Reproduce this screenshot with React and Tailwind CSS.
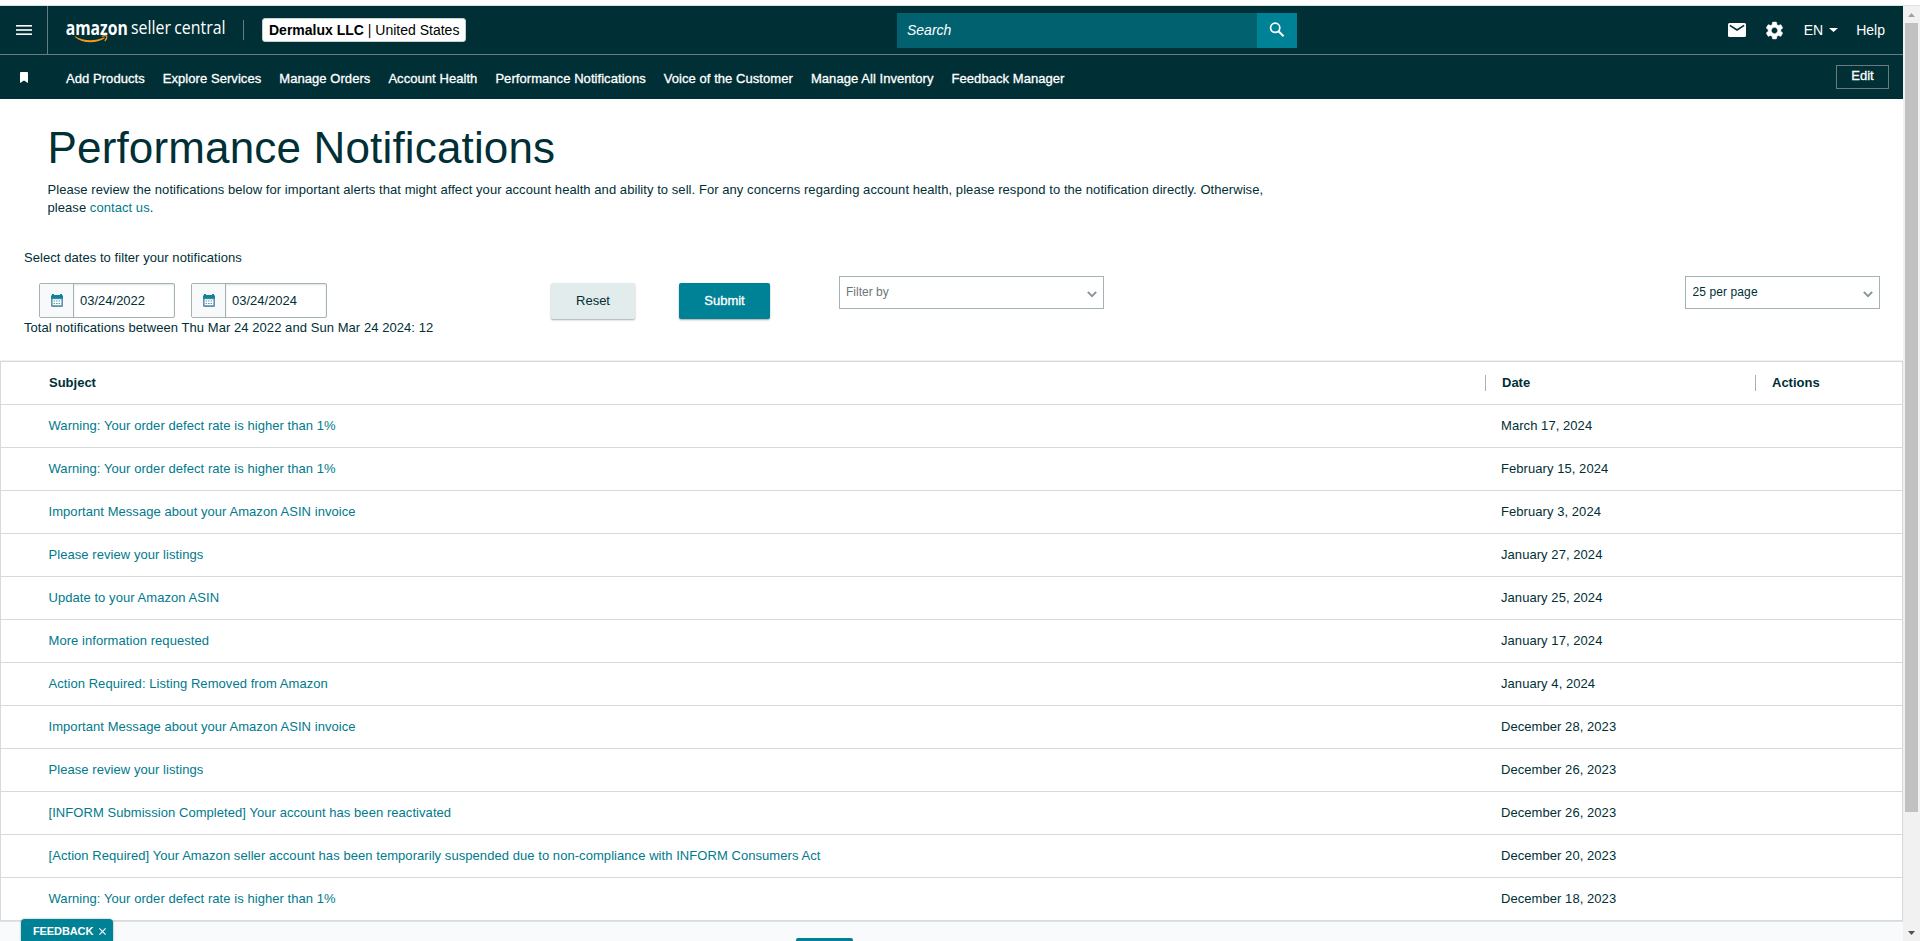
import React from "react";

const links = [
  "Add Products",
  "Explore Services",
  "Manage Orders",
  "Account Health",
  "Performance Notifications",
  "Voice of the Customer",
  "Manage All Inventory",
  "Feedback Manager",
];

const rows = [
  ["Warning: Your order defect rate is higher than 1%", "March 17, 2024"],
  ["Warning: Your order defect rate is higher than 1%", "February 15, 2024"],
  ["Important Message about your Amazon ASIN invoice", "February 3, 2024"],
  ["Please review your listings", "January 27, 2024"],
  ["Update to your Amazon ASIN", "January 25, 2024"],
  ["More information requested", "January 17, 2024"],
  ["Action Required: Listing Removed from Amazon", "January 4, 2024"],
  ["Important Message about your Amazon ASIN invoice", "December 28, 2023"],
  ["Please review your listings", "December 26, 2023"],
  ["[INFORM Submission Completed] Your account has been reactivated", "December 26, 2023"],
  [
    "[Action Required] Your Amazon seller account has been temporarily suspended due to non-compliance with INFORM Consumers Act",
    "December 20, 2023",
  ],
  ["Warning: Your order defect rate is higher than 1%", "December 18, 2023"],
];

function Logo() {
  return (
    <svg width="162" height="32" viewBox="0 0 162 32" overflow="visible" className="shrink-0">
      <text x="-0.3" y="22.8" textLength="62" lengthAdjust="spacingAndGlyphs" fontFamily="'Open Sans', sans-serif" fontWeight="700" fontSize="20" fill="#fff">
        amazon
      </text>
      <text x="65" y="22.3" textLength="94.5" lengthAdjust="spacingAndGlyphs" wordSpacing="-1" fontFamily="'Open Sans', sans-serif" fontWeight="400" fontSize="18.8" fill="#fff">
        seller central
      </text>
      <path d="M9 24.2 C17 29 29 29.6 38.2 25.2 L38.8 26.2 C30 32 16.5 31.8 8.6 24.8 Z" fill="#f7981f" />
      <path d="M36.2 24.3 C38 23.5 40 23.5 40.8 24 C41 25.2 40.3 27.2 39.1 28.5" fill="none" stroke="#f7981f" strokeWidth="1.2" strokeLinecap="round" />
    </svg>
  );
}

function TopBar() {
  return (
    <div className="flex h-[49px] items-center border-b border-[#6b7b7d]">
      <div className="flex h-full w-[48px] shrink-0 items-center justify-center border-r border-[#6b7b7d]">
        <svg width="16" height="10" viewBox="0 0 16 10" fill="#fff">
          <rect width="16" height="1.6" />
          <rect y="4.2" width="16" height="1.6" />
          <rect y="8.4" width="16" height="1.6" />
        </svg>
      </div>
      <div className="-mt-1 ml-[18px] h-8 shrink-0">
        <Logo />
      </div>
      <div className="ml-[15px] h-5 w-px shrink-0 bg-[#6b7b7d]" />
      <div className="ml-[18px] flex h-6 w-[204px] shrink-0 items-center whitespace-nowrap rounded-[3px] border border-[#c8cfd0] bg-white pl-[6px] text-sm text-black">
        <span>
          <b>Dermalux LLC</b> | United States
        </span>
      </div>
      <div className="ml-[431px] flex h-[35px] w-[400px] shrink-0">
        <div className="flex flex-1 items-center bg-[#02616f] pl-[10px] text-sm italic text-white">Search</div>
        <div className="flex w-10 items-center justify-center bg-[#008296]">
          <svg width="16" height="16" viewBox="0 0 16 16" fill="none" stroke="#fff">
            <circle cx="6.2" cy="5.8" r="4.6" strokeWidth="1.7" />
            <path d="M9.5 9.2 L14.6 14.2" strokeWidth="2" />
          </svg>
        </div>
      </div>
      <div className="ml-auto flex items-center pr-[18px] text-sm text-white">
        <svg width="18" height="14" viewBox="0 0 18 14">
          <rect width="18" height="14" rx="1.5" fill="#fff" />
          <path d="M1.8 2.4 L9 7 L16.2 2.4" fill="none" stroke="#002f36" strokeWidth="1.6" />
        </svg>
        <svg className="ml-[18.5px]" width="21" height="21" viewBox="0 0 24 24" fill="#fff" stroke="#fff" strokeWidth="0.6">
          <path d="M19.14 12.94c.04-.3.06-.61.06-.94 0-.32-.02-.64-.07-.94l2.03-1.58c.18-.14.23-.41.12-.61l-1.92-3.32c-.12-.22-.37-.29-.59-.22l-2.39.96c-.5-.38-1.03-.7-1.62-.94l-.36-2.54c-.04-.24-.24-.41-.48-.41h-3.84c-.24 0-.43.17-.47.41l-.36 2.54c-.59.24-1.13.57-1.62.94l-2.39-.96c-.22-.08-.47 0-.59.22L2.74 8.87c-.12.21-.08.47.12.61l2.03 1.58c-.05.3-.09.63-.09.94s.02.64.07.94l-2.03 1.58c-.18.14-.23.41-.12.61l1.92 3.32c.12.22.37.29.59.22l2.39-.96c.5.38 1.03.7 1.62.94l.36 2.54c.05.24.24.41.48.41h3.84c.24 0 .44-.17.47-.41l.36-2.54c.59-.24 1.13-.56 1.62-.94l2.39.96c.22.08.47 0 .59-.22l1.92-3.32c.12-.22.07-.47-.12-.61l-2.01-1.58zM12 15.6c-1.98 0-3.6-1.62-3.6-3.6s1.62-3.6 3.6-3.6 3.6 1.62 3.6 3.6-1.62 3.6-3.6 3.6z" />
        </svg>
        <span className="ml-[18.5px]">EN</span>
        <svg className="ml-[6px]" width="9" height="4" viewBox="0 0 9 4" fill="#fff">
          <path d="M0 0H9L4.5 4Z" />
        </svg>
        <span className="ml-[18px]">Help</span>
      </div>
    </div>
  );
}

function NavBar() {
  return (
    <div className="flex h-11 items-center">
      <div className="flex w-[47px] shrink-0 justify-center pl-px pt-px">
        <svg width="8" height="11" viewBox="0 0 9 11" preserveAspectRatio="none" fill="#fff">
          <path d="M1 0H8Q9 0 9 1V11L4.5 8.6L0 11V1Q0 0 1 0Z" />
        </svg>
      </div>
      <nav className="ml-[19px] flex gap-[18px] whitespace-nowrap pt-[4px] text-[13px] leading-[18px] tracking-[0.06px] text-white [-webkit-text-stroke:0.3px_white]">
        {links.map((l) => (
          <a key={l}>{l}</a>
        ))}
      </nav>
      <div className="mb-[1px] ml-auto mr-[14px] flex h-6 w-[53px] items-center justify-center border border-[#6b7b7d] pb-[1px] text-[13px] text-white [-webkit-text-stroke:0.3px_white]">
        Edit
      </div>
    </div>
  );
}

function DateField({ value }) {
  return (
    <div className="flex h-[35px] w-[136px] shrink-0 rounded-[2px] border border-[#a3b2b3]">
      <div className="flex w-[34px] items-center justify-center border-r border-[#a3b2b3] bg-[#f8f9fa]">
        <svg width="12" height="13" viewBox="0 0 12 13">
          <path d="M1.5 1H10.5Q12 1 12 2.5V11.5Q12 13 10.5 13H1.5Q0 13 0 11.5V2.5Q0 1 1.5 1Z" fill="#5b93ae" />
          <path d="M1 0H3V1H9V0H11V1.2Q12 1.5 12 2.5V4.5H0V2.5Q0 1.5 1 1.2Z" fill="#128297" />
          <path d="M1.6 5.2H10.4V11.2H1.6Z" fill="#fff" />
          <path d="M2.6 7H9.6M2.6 9.5H9.6" stroke="#5b93ae" strokeWidth="1.1" strokeDasharray="1.5 1" />
        </svg>
      </div>
      <div className="flex flex-1 items-center pl-[6px] text-[13px] shadow-[inset_0_1px_2px_rgba(0,0,0,0.12)]">{value}</div>
    </div>
  );
}

function Chevron() {
  return (
    <svg width="10" height="7" viewBox="0 0 10 7" fill="none" stroke="#879596" strokeWidth="1.9">
      <path d="M0.8 0.9L5 5.2L9.2 0.9" />
    </svg>
  );
}

function Filters() {
  return (
    <div className="flex h-[43px] items-start pl-[39px] text-[13px]">
      <div className="mt-[7px] flex shrink-0 gap-4">
        <DateField value="03/24/2022" />
        <DateField value="03/24/2024" />
      </div>
      <div className="ml-[223px] mt-[7px] flex h-9 w-[86px] shrink-0 items-center justify-center">
        <div className="flex h-9 w-[84px] items-center justify-center rounded-[2px] bg-[#e3eced] shadow-[0_1px_2px_rgba(0,0,0,0.35)]">Reset</div>
      </div>
      <div className="ml-[43px] mt-[7px] flex h-9 w-[91px] shrink-0 items-center justify-center rounded-[2px] bg-[#008296] text-white shadow-[0_1px_2px_rgba(0,0,0,0.35)] [-webkit-text-stroke:0.3px_white]">
        Submit
      </div>
      <div className="ml-[69px] flex h-[33px] w-[265px] shrink-0 justify-between border border-[#a3b2b3] pl-[6px] pr-[6px] text-[12px] leading-[30px] text-[#6c7778]">
        Filter by
        <span className="mt-[14px] flex">
          <Chevron />
        </span>
      </div>
      <div className="ml-auto mr-[23px] flex h-[33px] w-[195px] shrink-0 justify-between border border-[#a3b2b3] pl-[6.5px] pr-[6px] text-[12px] leading-[30px] tracking-[0.1px]">
        25 per page
        <span className="mt-[14px] flex">
          <Chevron />
        </span>
      </div>
    </div>
  );
}

const cols = "grid grid-cols-[1484px_270px_1fr]";

function Table() {
  return (
    <div className="z-10 border border-[#d5dbdb] text-[13px] shadow-[0_1px_0_#dfe3e4,0_-1px_1px_rgba(0,0,0,0.06)]">
      <div className={`${cols} h-[42px] items-center font-bold`}>
        <div className="pl-[48px]">Subject</div>
        <div className="flex items-center">
          <span className="h-4 w-px bg-[#a3b2b3]" />
          <span className="ml-[16px]">Date</span>
        </div>
        <div className="flex items-center">
          <span className="h-4 w-px bg-[#a3b2b3]" />
          <span className="ml-[16px]">Actions</span>
        </div>
      </div>
      {rows.map(([subject, date], i) => (
        <div key={i} className={`${cols} h-[43px] items-center border-t border-[#d5dbdb] tracking-[0.06px]`}>
          <a className="whitespace-nowrap pl-[47.5px] text-[#007a8c]">{subject}</a>
          <div className="pl-[16px]">{date}</div>
        </div>
      ))}
    </div>
  );
}

function Scrollbar() {
  return (
    <div className="flex w-[17px] flex-col items-center bg-[#f1f1f1]">
      <div className="flex h-[17px] items-center justify-center">
        <svg width="7" height="4" viewBox="0 0 7 4" fill="#a3a3a3">
          <path d="M0 4L3.5 0L7 4Z" />
        </svg>
      </div>
      <div className="h-[789px] w-[13px] bg-[#c1c1c1]" />
      <div className="mt-auto flex h-[17px] items-center justify-center">
        <svg width="7" height="4" viewBox="0 0 7 4" fill="#505050">
          <path d="M0 0H7L3.5 4Z" />
        </svg>
      </div>
    </div>
  );
}

export default function App() {
  return (
    <div className="flex h-[941px] w-[1920px] flex-col overflow-hidden bg-white pt-[5px] font-['Liberation_Sans',Arial,sans-serif] text-[#002f36]">
      <div className="h-px shrink-0 bg-[#d5e5dd]" />
      <div className="flex min-h-0 flex-1">
        <div className="relative flex w-[1903px] flex-col">
          <header className="h-[93px] shrink-0 bg-[#002f36]">
            <TopBar />
            <NavBar />
          </header>
          <main className="relative z-10 flex flex-col">
            <h1 className="mt-[23px] pl-[47.5px] text-[44px] leading-[52px] tracking-[0.16px]">Performance Notifications</h1>
            <p className="mt-[7px] w-[1290px] pl-[47.5px] text-[13px] leading-[18px] tracking-[0.06px]">
              Please review the notifications below for important alerts that might affect your account health and ability to sell. For any
              concerns regarding account health, please respond to the notification directly. Otherwise,
              <br />
              please <a className="text-[#007a8c]">contact us</a>.
            </p>
            <p className="mt-8 pl-6 text-[13px] leading-[18px] tracking-[0.06px]">Select dates to filter your notifications</p>
            <div className="mt-[9px]">
              <Filters />
            </div>
            <p className="pl-6 text-[13px] leading-[18px] tracking-[0.06px]">
              Total notifications between Thu Mar 24 2022 and Sun Mar 24 2024: 12
            </p>
            <div className="mt-[24px]">
              <Table />
            </div>
          </main>
          <footer className="flex flex-1 items-end bg-[#f8fafc]">
            <div className="ml-[796px] h-[3px] w-[57px] rounded-t-[2px] bg-[#008296]" />
          </footer>
          <div className="absolute bottom-0 left-[21px] z-20 flex h-[22px] w-[92px] items-center rounded-t-[4px] bg-[#008296] pl-3 pt-[3px] text-[11px] font-bold tracking-[-0.1px] text-white shadow-[0_0_2px_rgba(0,0,0,0.4)]">
            FEEDBACK
            <svg className="mb-px ml-[6px]" width="7" height="7" viewBox="0 0 7 7" stroke="#fff" strokeWidth="1.1">
              <path d="M0.4 0.4L6.6 6.6M6.6 0.4L0.4 6.6" />
            </svg>
          </div>
        </div>
        <Scrollbar />
      </div>
    </div>
  );
}
